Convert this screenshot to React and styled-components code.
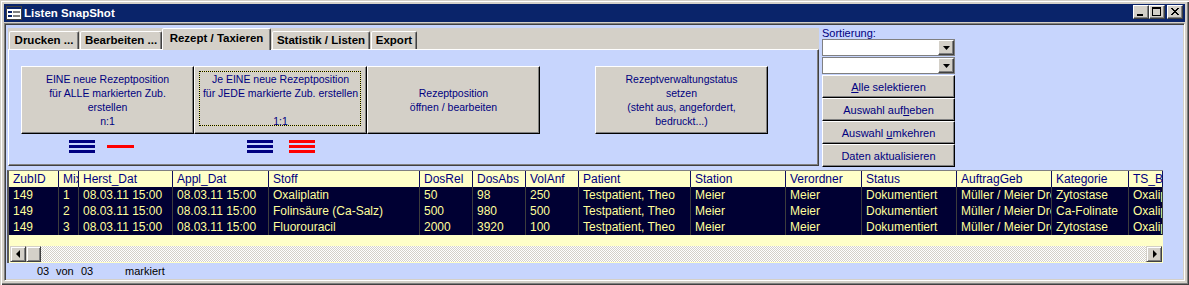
import React from 'react'
import styled, { createGlobalStyle, css } from 'styled-components'

const FACE = '#d4d0c8'
const FORM = '#c7d5fd'
const NAVY = '#000080'
const HEAD_BG = '#ffffc8'
const ROW_BG = '#000033'
const ROW_FG = '#ffff9c'

const GlobalStyle = createGlobalStyle`
  * { box-sizing: border-box; }
  html, body { margin: 0; padding: 0; background: ${FACE}; }
  body { font-family: "Liberation Sans", Arial, sans-serif; }
`

const Window = styled.div`
  width: 1189px;
  height: 285px;
  padding: 4px;
  display: flex;
  flex-direction: column;
  background: ${FACE};
  box-shadow: inset 1px 1px 0 ${FACE}, inset 2px 2px 0 #fff,
    inset -1px -1px 0 #404040, inset -2px -2px 0 #808080;
`

const TitleBar = styled.div`
  height: 18px;
  flex: none;
  display: flex;
  align-items: center;
  padding: 0 2px;
  background: #0a246a;
  color: #fff;
  font-weight: bold;
  font-size: 11.5px;
`

const TitleText = styled.span`
  margin-left: 2px;
  flex: 1;
`

const CaptionButton = styled.div`
  width: 16px;
  height: 14px;
  align-self: flex-start;
  margin-top: 1px;
  margin-left: ${p => p.$ml || 0}px;
  background: ${FACE};
  border: 1px solid;
  border-color: #fff #404040 #404040 #fff;
  box-shadow: inset -1px -1px 0 #808080;
  display: flex;
  svg { display: block; }
`

const Client = styled.div`
  flex: 1;
  margin-top: 1px;
  min-height: 0;
  background: ${FORM};
  border: 1px solid;
  border-color: #808080 #fff #fff #808080;
  box-shadow: inset 1px 1px 0 #404040, inset -1px -1px 0 ${FACE};
  padding: 4px 0 0 2px;
  display: flex;
  flex-direction: column;
`

const TopArea = styled.div`
  display: flex;
  align-items: flex-start;
  margin-left: 1px;
`

const TabControl = styled.div`
  width: 811px;
  display: flex;
  flex-direction: column;
`

const TabStrip = styled.div`
  height: 21px;
  display: flex;
  align-items: flex-end;
  background: ${FACE};
`

const Tab = styled.div`
  position: relative;
  z-index: 2;
  width: ${p => p.$w}px;
  margin-left: ${p => p.$ml}px;
  height: 18px;
  background: ${FACE};
  border: 1px solid;
  border-bottom: none;
  border-color: #fff #404040 transparent #fff;
  border-radius: 2px 2px 0 0;
  box-shadow: inset -1px 0 0 #808080;
  font-size: 11.5px;
  font-weight: bold;
  color: #000;
  display: flex;
  align-items: center;
  justify-content: center;
  white-space: nowrap;
  padding-bottom: 1px;
  ${p => p.$active && css`
    height: 22px;
    margin-bottom: -1px;
    padding-bottom: 4px;
  `}
`

const Panel = styled.div`
  height: 117px;
  border: 1px solid;
  border-color: #fff #404040 #404040 #fff;
  box-shadow: inset -1px -1px 0 #808080;
  padding: 16px 0 0 12px;
`

const ButtonRow = styled.div`
  display: flex;
`

const BigButton = styled.div`
  position: relative;
  width: 173px;
  height: 68px;
  margin-left: ${p => p.$ml || 0}px;
  background: ${FACE};
  border: 1px solid;
  border-color: #fff #000 #000 #fff;
  box-shadow: inset -1px -1px 0 #808080;
  color: ${NAVY};
  font-size: 10.5px;
  line-height: 14px;
  text-align: center;
  white-space: nowrap;
  display: flex;
  align-items: center;
  justify-content: center;
  span { position: relative; z-index: 1; }
  ${p => p.$focused && css`
    &::before {
      content: '';
      position: absolute;
      inset: 4px 5px 7px 4px;
      border: 1px dotted #000;
      background: linear-gradient(${FACE}, ${FACE}) padding-box, #f4f080 border-box;
    }
  `}
`

const MarkRow = styled.div`
  display: flex;
  align-items: center;
  margin-top: 6px;
  padding-left: 48px;
`

const Mark = styled.div`
  width: ${p => p.$w}px;
  margin-left: ${p => p.$ml}px;
  display: flex;
  flex-direction: column;
  gap: 2px;
`

const Bar = styled.div`
  height: 3px;
  background: ${p => p.$color};
`

const SideColumn = styled.div`
  width: 133px;
  margin-left: 3px;
  display: flex;
  flex-direction: column;
`

const Label = styled.div`
  height: 11px;
  line-height: 11px;
  font-size: 11px;
  color: ${NAVY};
`

const Combo = styled.div`
  height: 17px;
  margin-bottom: 1px;
  background: #fff;
  border: 1px solid #808080;
  display: flex;
  justify-content: flex-end;
`

const DropButton = styled.div`
  width: 16px;
  height: 15px;
  background: ${FACE};
  border: 1px solid;
  border-color: #fff #404040 #404040 #fff;
  box-shadow: inset -1px -1px 0 #808080;
  display: flex;
  align-items: center;
  justify-content: center;
`

const SideButton = styled.div`
  height: 23px;
  background: ${FACE};
  border: 1px solid;
  border-color: #fff #000 #000 #fff;
  box-shadow: inset -1px -1px 0 #808080;
  color: ${NAVY};
  font-size: 11px;
  display: flex;
  align-items: center;
  justify-content: center;
  white-space: nowrap;
`

const DataSheet = styled.div`
  margin-top: 3px;
  width: 1156px;
  border-left: 2px solid #5a5a5a;
  border-top: 1px solid #808080;
  background: ${HEAD_BG};
  padding-bottom: 1px;
`

const Grid = styled.div`
  display: grid;
  grid-template-columns: ${p => p.$cols};
`

const Cell = styled.div`
  height: 16px;
  line-height: 16px;
  padding-left: 4px;
  font-size: 12px;
  white-space: nowrap;
  overflow: hidden;
  color: ${p => (p.$head ? NAVY : ROW_FG)};
  background: ${p => (p.$head ? HEAD_BG : ROW_BG)};
  border-right: 1px solid ${p => (p.$head ? '#101060' : '#3c3c3c')};
`

const Blank = styled.div`
  height: 11px;
`

const ScrollBar = styled.div`
  height: 16px;
  margin: 0 1px;
  display: flex;
  background: repeating-conic-gradient(#fff 0% 25%, ${FACE} 0% 50%) 0 0 / 2px 2px;
`

const ScrollButton = styled.div`
  width: ${p => p.$w || 16}px;
  height: 16px;
  background: ${FACE};
  border: 1px solid;
  border-color: ${FACE} #404040 #404040 ${FACE};
  box-shadow: inset 1px 1px 0 #fff, inset -1px -1px 0 #808080;
  display: flex;
  align-items: center;
  justify-content: center;
  margin-left: ${p => (p.$right ? 'auto' : '0')};
`

const Arrow = styled.div`
  width: 0;
  height: 0;
  border-top: 4px solid transparent;
  border-bottom: 4px solid transparent;
  ${p => (p.$dir === 'left'
    ? css`border-right: 4px solid #000; margin-right: 1px;`
    : css`border-left: 4px solid #000; margin-left: 1px;`)}
`

const StatusBar = styled.div`
  height: 16px;
  display: flex;
  align-items: center;
  padding-left: 30px;
  font-size: 11px;
  color: #000;
`

const StatusField = styled.span`
  width: ${p => (p.$w ? `${p.$w}px` : 'auto')};
`

const columns = [
  ['ZubID', 50], ['Mix', 20], ['Herst_Dat', 94], ['Appl_Dat', 96], ['Stoff', 151],
  ['DosRel', 53], ['DosAbs', 53], ['VolAnf', 53], ['Patient', 112], ['Station', 95],
  ['Verordner', 76], ['Status', 95], ['AuftragGeb', 95], ['Kategorie', 77], ['TS_Bezeichnung', 34]
]

const rows = [
  ['149', '1', '08.03.11 15:00', '08.03.11 15:00', 'Oxaliplatin', '50', '98', '250', 'Testpatient, Theo', 'Meier', 'Meier', 'Dokumentiert', 'Müller / Meier Dres.', 'Zytostase', 'Oxaliplatin'],
  ['149', '2', '08.03.11 15:00', '08.03.11 15:00', 'Folinsäure (Ca-Salz)', '500', '980', '500', 'Testpatient, Theo', 'Meier', 'Meier', 'Dokumentiert', 'Müller / Meier Dres.', 'Ca-Folinate', 'Oxaliplatin'],
  ['149', '3', '08.03.11 15:00', '08.03.11 15:00', 'Fluorouracil', '2000', '3920', '100', 'Testpatient, Theo', 'Meier', 'Meier', 'Dokumentiert', 'Müller / Meier Dres.', 'Zytostase', 'Oxaliplatin']
]

const tabs = [
  { label: 'Drucken ...', w: 70, ml: 1 },
  { label: 'Bearbeiten ...', w: 82, ml: 1 },
  { label: 'Rezept / Taxieren', w: 109, ml: 0, active: true },
  { label: 'Statistik / Listen', w: 98, ml: 1 },
  { label: 'Export', w: 46, ml: 1 }
]

const FormIcon = () => (
  <svg width='16' height='14' viewBox='0 0 16 14'>
    <rect x='0.5' y='0.5' width='15' height='13' fill='#fff' stroke='#404040' />
    <rect x='1' y='1' width='14' height='2' fill='#0a246a' />
    <rect x='2' y='5' width='4' height='2' fill='#0a246a' />
    <rect x='7' y='5' width='7' height='2' fill='#808080' />
    <rect x='2' y='9' width='4' height='2' fill='#0a246a' />
    <rect x='7' y='9' width='7' height='2' fill='#808080' />
  </svg>
)

const Triangle = () => (
  <svg width='7' height='4' viewBox='0 0 7 4'>
    <polygon points='0,0 7,0 3.5,4' fill='#000' />
  </svg>
)

const Lines = ({ w, ml, color, count }) => (
  <Mark $w={w} $ml={ml}>
    {Array.from({ length: count }).map((_, i) => <Bar key={i} $color={color} />)}
  </Mark>
)

export default function App () {
  const cols = columns.map(c => `${c[1]}px`).join(' ')
  return (
    <>
      <GlobalStyle />
      <Window>
        <TitleBar>
          <FormIcon />
          <TitleText>Listen SnapShot</TitleText>
          <CaptionButton>
            <svg width='14' height='12' viewBox='0 0 14 12'><rect x='3' y='8' width='6' height='2' fill='#000' /></svg>
          </CaptionButton>
          <CaptionButton>
            <svg width='14' height='12' viewBox='0 0 14 12'>
              <rect x='2.5' y='1.5' width='8' height='8' fill='none' stroke='#000' />
              <rect x='2' y='1' width='9' height='2' fill='#000' />
            </svg>
          </CaptionButton>
          <CaptionButton $ml={2}>
            <svg width='14' height='12' viewBox='0 0 14 12'>
              <path d='M3 2 L10 9 M4 2 L11 9 M10 2 L3 9 M11 2 L4 9' stroke='#000' strokeWidth='1' />
            </svg>
          </CaptionButton>
        </TitleBar>
        <Client>
          <TopArea>
            <TabControl>
              <TabStrip>
                {tabs.map(t => (
                  <Tab key={t.label} $w={t.w} $ml={t.ml} $active={t.active}>{t.label}</Tab>
                ))}
              </TabStrip>
              <Panel>
                <ButtonRow>
                  <BigButton>
                    <span>EINE neue Rezeptposition<br />für ALLE markierten Zub.<br />erstellen<br />n:1</span>
                  </BigButton>
                  <BigButton $focused>
                    <span>Je EINE neue Rezeptposition<br />für JEDE markierte Zub. erstellen<br />&nbsp;<br />1:1</span>
                  </BigButton>
                  <BigButton>
                    <span>Rezeptposition<br />öffnen / bearbeiten</span>
                  </BigButton>
                  <BigButton $ml={55}>
                    <span>Rezeptverwaltungstatus<br />setzen<br />(steht aus, angefordert,<br />bedruckt...)</span>
                  </BigButton>
                </ButtonRow>
                <MarkRow>
                  <Lines w={26} ml={0} color={NAVY} count={3} />
                  <Lines w={27} ml={12} color='#ff0000' count={1} />
                  <Lines w={26} ml={113} color={NAVY} count={3} />
                  <Lines w={26} ml={16} color='#ff0000' count={3} />
                </MarkRow>
              </Panel>
            </TabControl>
            <SideColumn>
              <Label>Sortierung:</Label>
              <Combo><DropButton><Triangle /></DropButton></Combo>
              <Combo><DropButton><Triangle /></DropButton></Combo>
              <SideButton><span><u>A</u>lle selektieren</span></SideButton>
              <SideButton><span>Auswahl auf<u>h</u>eben</span></SideButton>
              <SideButton><span>Auswahl <u>u</u>mkehren</span></SideButton>
              <SideButton><span>Daten aktualisieren</span></SideButton>
            </SideColumn>
          </TopArea>
          <DataSheet>
            <Grid $cols={cols}>
              {columns.map(c => <Cell key={c[0]} $head>{c[0]}</Cell>)}
              {rows.map((r, i) => r.map((v, j) => <Cell key={`${i}-${j}`}>{v}</Cell>))}
            </Grid>
            <Blank />
            <ScrollBar>
              <ScrollButton><Arrow $dir='left' /></ScrollButton>
              <ScrollButton $w={15} />
              <ScrollButton $right><Arrow $dir='right' /></ScrollButton>
            </ScrollBar>
          </DataSheet>
          <StatusBar>
            <StatusField $w={19}>03</StatusField>
            <StatusField $w={25}>von</StatusField>
            <StatusField $w={44}>03</StatusField>
            <StatusField>markiert</StatusField>
          </StatusBar>
        </Client>
      </Window>
    </>
  )
}
